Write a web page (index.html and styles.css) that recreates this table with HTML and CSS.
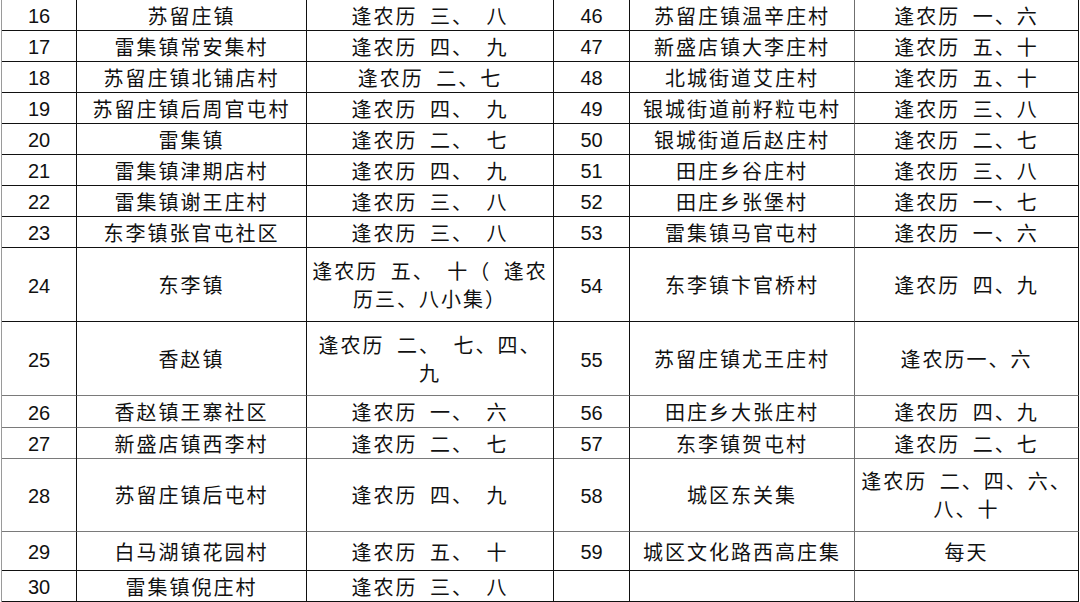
FILE: index.html
```html
<!DOCTYPE html>
<html lang="zh-CN">
<head>
<meta charset="utf-8">
<title>集市时间表</title>
<link rel="stylesheet" href="styles.css">
</head>
<body>
<div class="sheet">
  <div class="row"><div class="c num">16</div><div class="c">苏留庄镇</div><div class="c">逢农历 三、 八</div><div class="c num">46</div><div class="c">苏留庄镇温辛庄村</div><div class="c">逢农历 一、六</div></div>
  <div class="row"><div class="c num">17</div><div class="c">雷集镇常安集村</div><div class="c">逢农历 四、 九</div><div class="c num">47</div><div class="c">新盛店镇大李庄村</div><div class="c">逢农历 五、十</div></div>
  <div class="row"><div class="c num">18</div><div class="c">苏留庄镇北铺店村</div><div class="c">逢农历 二、七</div><div class="c num">48</div><div class="c">北城街道艾庄村</div><div class="c">逢农历 五、十</div></div>
  <div class="row"><div class="c num">19</div><div class="c">苏留庄镇后周官屯村</div><div class="c">逢农历 四、 九</div><div class="c num">49</div><div class="c">银城街道前籽粒屯村</div><div class="c">逢农历 三、八</div></div>
  <div class="row"><div class="c num">20</div><div class="c">雷集镇</div><div class="c">逢农历 二、 七</div><div class="c num">50</div><div class="c">银城街道后赵庄村</div><div class="c">逢农历 二、七</div></div>
  <div class="row"><div class="c num">21</div><div class="c">雷集镇津期店村</div><div class="c">逢农历 四、 九</div><div class="c num">51</div><div class="c">田庄乡谷庄村</div><div class="c">逢农历 三、八</div></div>
  <div class="row"><div class="c num">22</div><div class="c">雷集镇谢王庄村</div><div class="c">逢农历 三、 八</div><div class="c num">52</div><div class="c">田庄乡张堡村</div><div class="c">逢农历 一、七</div></div>
  <div class="row"><div class="c num">23</div><div class="c">东李镇张官屯社区</div><div class="c">逢农历 三、 八</div><div class="c num">53</div><div class="c">雷集镇马官屯村</div><div class="c">逢农历 一、六</div></div>
  <div class="row tall"><div class="c num">24</div><div class="c">东李镇</div><div class="c">逢农历 五、 十（ 逢农历三、八小集）</div><div class="c num">54</div><div class="c">东李镇卞官桥村</div><div class="c">逢农历 四、九</div></div>
  <div class="row tall soft"><div class="c num">25</div><div class="c">香赵镇</div><div class="c">逢农历 二、 七、四、九</div><div class="c num">55</div><div class="c">苏留庄镇尤王庄村</div><div class="c">逢农历一、六</div></div>
  <div class="row r32 soft"><div class="c num">26</div><div class="c">香赵镇王寨社区</div><div class="c">逢农历 一、 六</div><div class="c num">56</div><div class="c">田庄乡大张庄村</div><div class="c">逢农历 四、九</div></div>
  <div class="row r30 soft"><div class="c num">27</div><div class="c">新盛店镇西李村</div><div class="c">逢农历 二、 七</div><div class="c num">57</div><div class="c">东李镇贺屯村</div><div class="c">逢农历 二、七</div></div>
  <div class="row tall soft"><div class="c num">28</div><div class="c">苏留庄镇后屯村</div><div class="c">逢农历 四、 九</div><div class="c num">58</div><div class="c">城区东关集</div><div class="c">逢农历 二、四、六、八、十</div></div>
  <div class="row r39"><div class="c num">29</div><div class="c">白马湖镇花园村</div><div class="c">逢农历 五、 十</div><div class="c num">59</div><div class="c">城区文化路西高庄集</div><div class="c">每天</div></div>
  <div class="row"><div class="c num">30</div><div class="c">雷集镇倪庄村</div><div class="c">逢农历 三、 八</div><div class="c num"></div><div class="c"></div><div class="c"></div></div>
</div>
</body>
</html>
```

FILE: styles.css
```css
html, body {
  margin: 0;
  padding: 0;
  background: #ffffff;
  overflow: hidden;
}

.sheet {
  margin-left: 1px;
  width: 1078px;
  border-left: 1px solid #9a9a9a;
  color: #111111;
  font-family: "Noto Sans CJK SC", "Noto Sans", sans-serif;
  font-size: 20px;
}

.row {
  display: grid;
  grid-template-columns: 75px 230px 247px 76px 225px 224px;
  height: 31px;
}

.row.tall { height: 74px; }
.row.r32 { height: 32px; }
.row.r30 { height: 30px; }
.row.r39 { height: 39px; }

.c {
  box-sizing: border-box;
  display: flex;
  align-items: center;
  justify-content: center;
  text-align: center;
  padding: 1px 4px 0;
  border-right: 1px solid #111111;
  border-bottom: 1px solid #111111;
  letter-spacing: 2px;
  word-spacing: 6px;
  line-height: 28px;
  white-space: normal;
}

.row.soft .c { border-bottom-color: #7a7a7a; }

.c:nth-child(5) { border-right-color: #6f6f6f; }

.c.num {
  font-family: "Liberation Sans", Arial, sans-serif;
  letter-spacing: 0;
  padding-top: 2px;
}
```
